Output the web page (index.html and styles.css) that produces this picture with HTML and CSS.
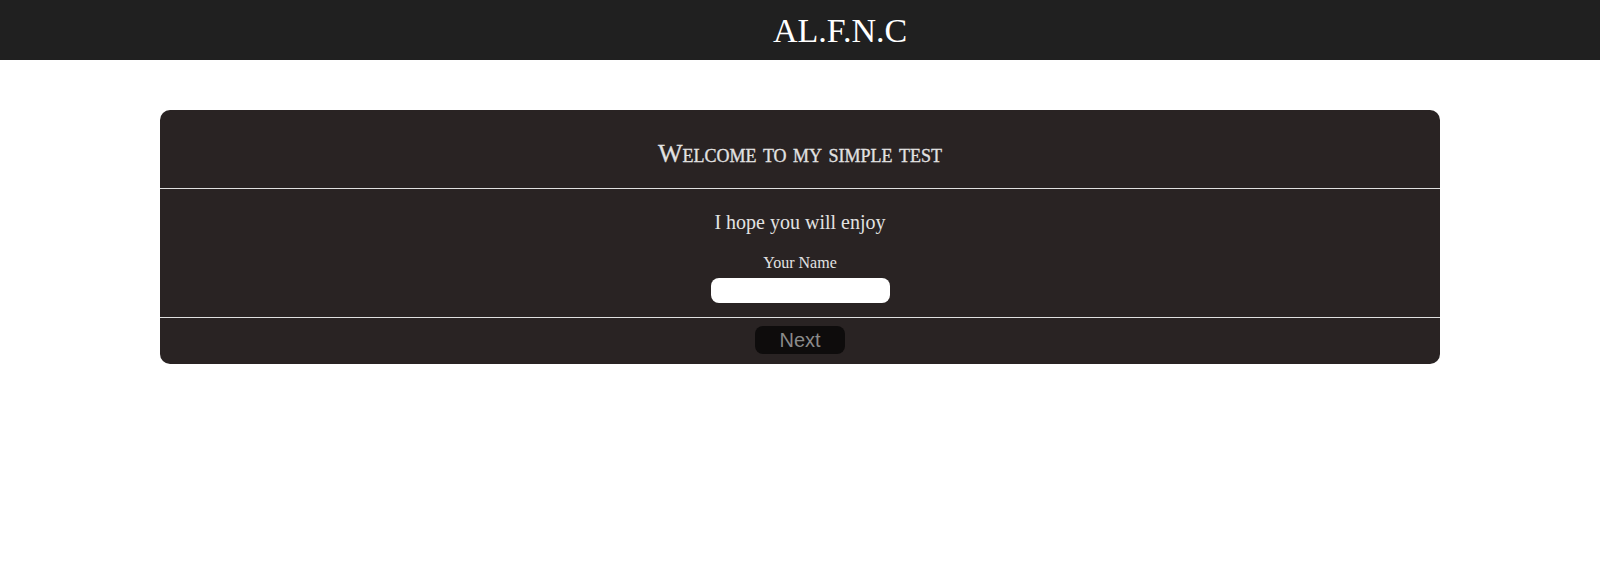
FILE: index.html
```html
<!DOCTYPE html>
<html lang="en">
<head>
<meta charset="utf-8">
<title>AL.F.N.C</title>
<link rel="stylesheet" href="styles.css">
</head>
<body>
<header class="topbar">
  <h1 class="brand">AL.F.N.C</h1>
</header>
<main class="card">
  <section class="card-head">
    <h2 class="card-title">Welcome to my simple test</h2>
  </section>
  <section class="card-body">
    <p class="intro">I hope you will enjoy</p>
    <label class="field-label" for="name">Your Name</label>
    <input class="field-input" id="name" type="text">
  </section>
  <section class="card-foot">
    <button class="next-btn" type="button">Next</button>
  </section>
</main>
</body>
</html>
```
FILE: styles.css
```css
html, body {
  margin: 0;
  padding: 0;
  background: #ffffff;
  font-family: "Liberation Serif", "Times New Roman", serif;
}

.topbar {
  height: 60px;
  background: #202020;
  display: flex;
  align-items: center;
  justify-content: center;
  padding-left: 80px;
}

.brand {
  margin: 0;
  font-size: 34px;
  font-weight: normal;
  line-height: 39px;
  color: #ffffff;
}

.card {
  width: 80%;
  margin: 50px auto 0;
  background: #292323;
  border-radius: 10px;
  color: #e2e2e2;
}

.card-head {
  padding: 29px 0 19px;
  border-bottom: 1px solid #e0e0e0;
  text-align: center;
}

.card-title {
  margin: 0;
  font-size: 26px;
  line-height: 30px;
  font-weight: normal;
  font-variant: small-caps;
  -webkit-text-stroke: 0.3px #e2e2e2;
}

.card-body {
  display: flex;
  flex-direction: column;
  align-items: center;
  padding: 22px 0 14px;
  border-bottom: 1px solid #e0e0e0;
}

.intro {
  margin: 0 0 20px;
  font-size: 20px;
  line-height: 23px;
}

.field-label {
  font-size: 16px;
  line-height: 18px;
  margin-bottom: 6px;
}

.field-input {
  box-sizing: border-box;
  width: 179px;
  height: 25px;
  border: none;
  border-radius: 8px;
  background: #ffffff;
  padding: 0 8px;
  outline: none;
}

.card-foot {
  display: flex;
  justify-content: center;
  padding: 8px 0 10px;
}

.next-btn {
  width: 90px;
  height: 28px;
  border: none;
  border-radius: 8px;
  background: #0e0c0c;
  color: #8a8a8a;
  font-family: "Liberation Sans", Arial, sans-serif;
  font-size: 20px;
  line-height: 28px;
  padding: 0;
}
```
